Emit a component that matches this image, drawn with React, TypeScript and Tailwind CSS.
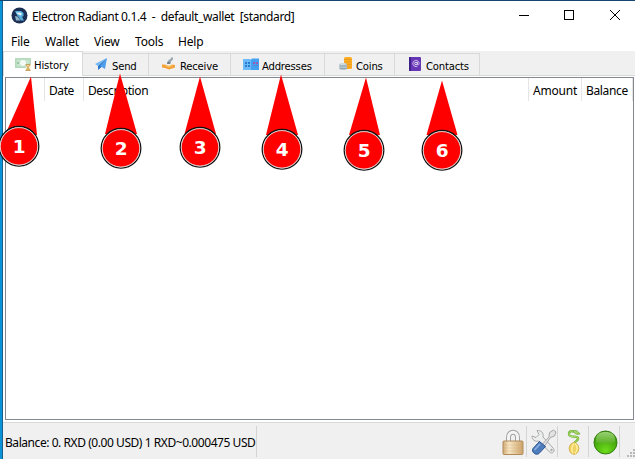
import React from 'react';

const menus = [
  { label: 'File', cls: 'w-[34px] tracking-[-0.1px]' },
  { label: 'Wallet', cls: 'w-[49px] tracking-[-0.15px]' },
  { label: 'View', cls: 'w-[41px] tracking-[-0.2px]' },
  { label: 'Tools', cls: 'w-[43px] tracking-[-0.2px]' },
  { label: 'Help', cls: 'w-[40px] tracking-[-0.2px]' },
];

function AppLogo() {
  return (
    <svg width="17" height="17" viewBox="0 0 17 17" className="-mt-px shrink-0">
      <circle cx="8.500" cy="8.500" r="8" fill="#1b2f55" />
      <path d="M4 4h6l2.500 2v3l-1.500 1 2 3.500H10L6 8z" fill="#58aedb" />
      <path d="M5 5.500h4.500L11 7 9.500 8.500 6.500 7z" fill="#e6f1f7" />
      <path d="M4 9l2.500.500L9.500 13.500H5z" fill="#8fb4c9" />
    </svg>
  );
}

function HistoryIcon() {
  return (
    <svg width="17" height="15" viewBox="0 0 17 15" className="shrink-0">
      <rect x="0" y="1" width="16" height="10" rx=".5" fill="#b5d8bc" />
      <rect x="1.500" y="2.500" width="13" height="7" fill="#c7e4cc" />
      <circle cx="8" cy="6" r="3" fill="#f3faf3" />
      <circle cx="3" cy="6" r="1" fill="#89bb95" />
      <rect x="11" y="7" width="5" height="7" fill="#fff4d9" />
      <path d="M10.500 7.500h5M10.500 13.500h5M11 8l4 5M15 8l-4 5" stroke="#b18c49" strokeWidth=".8" fill="none" />
      <path d="M11.500 8.500h3L13 10zM11 13l2-2 2 2z" fill="#e4b94c" />
    </svg>
  );
}

function SendIcon() {
  return (
    <svg width="13" height="13" viewBox="0 0 13 13" className="shrink-0">
      <path d="M12 0L0 6l3 2z" fill="#72b7f4" />
      <path d="M12 0L3 8v4l3-2.500z" fill="#2876c8" />
      <path d="M12 0L5 8l5 3z" fill="#4f9fea" />
    </svg>
  );
}

function ReceiveIcon() {
  return (
    <svg width="14" height="14" viewBox="0 0 14 14" className="-mt-px shrink-0">
      <path d="M9 .5h2v2L9 4.500 8.500 7l-3-1 1-3 2-1z" fill="#9aa8b1" />
      <path d="M5.500 4.500l3 1-1 1.500H5z" fill="#6d7f8b" />
      <path d="M0 7.500h3l4 2 3-2 3 .5v2.500L7 12.500 3 11 0 10.500z" fill="#f3a137" />
      <path d="M1.500 8l5.500 2.500 5-2.500-3 .5H5z" fill="#ffc45f" />
    </svg>
  );
}

function AddressesIcon() {
  return (
    <svg width="17" height="13" viewBox="0 0 17 13" className="-mt-px shrink-0">
      <path d="M0 1h7l1 .5V12H0z" fill="#6bbafa" />
      <path d="M8 1.500L9 .5h7V12H8z" fill="#43a1f2" />
      <path d="M2 4h2v2H2zM5 4h2v2H5zM2 7h2v2H2zM5 7h2v2H5z" fill="#2d7bcf" />
      <path d="M10 4h2v2h-2zM13 4h2v2h-2zM10 7h1v1h-1z" fill="#a05bb8" />
      <path d="M12 7h3v1h-3z" fill="#5f78d0" />
    </svg>
  );
}

function CoinsIcon() {
  return (
    <svg width="14" height="14" viewBox="0 0 14 14" className="-mt-px shrink-0">
      <rect x="5" y="0" width="8" height="12" rx="1.500" fill="#ffad22" />
      <path d="M5 2.500h7.500M5 5h7.500M5 7.500h7.500M5 10h7.500" stroke="#e59722" strokeWidth=".8" />
      <rect x="0" y="6" width="8" height="7" rx="2.500" fill="#b9c8cf" />
      <path d="M1 9h7M1 11.500h7" stroke="#7f98a3" strokeWidth=".7" />
      <path d="M1.500 7h5" stroke="#e4eef0" />
    </svg>
  );
}

function ContactsIcon() {
  return (
    <svg width="13" height="14" viewBox="0 0 13 14" className="-mt-[2px] shrink-0">
      <rect x="0" y="0" width="12" height="14" rx="1" fill="#6736b5" />
      <rect x="0" y="0" width="2" height="14" rx=".5" fill="#40208a" />
      <circle cx="7" cy="6.500" r="1.300" fill="none" stroke="#fff" strokeWidth=".8" />
      <path d="M8.400 5v2.200c0 1 1.700 1 1.700-.7A3.100 3.100 0 1 0 8.500 9.200" fill="none" stroke="#e9dcff" strokeWidth=".8" />
    </svg>
  );
}

function Lock() {
  return (
    <svg width="22" height="27" viewBox="0 0 22 27">
      <defs>
        <linearGradient id="brass" x2="1">
          <stop stopColor="#d0a873" />
          <stop offset=".3" stopColor="#f8e6c4" />
          <stop offset="1" stopColor="#cda36b" />
        </linearGradient>
      </defs>
      <path d="M6.500 15V8.500c0-7 9-7 9 0V15" fill="none" stroke="#a2a2a2" strokeWidth="5" />
      <path d="M6.500 15V8.500c0-7 9-7 9 0V15" fill="none" stroke="#f4f4f4" strokeWidth="3" />
      <rect x="1" y="12" width="20" height="13.500" rx="1" fill="url(#brass)" stroke="#b08b5a" />
      <path d="M2.500 16h17M2.500 19h17M2.500 22h17" stroke="#b58c55" strokeOpacity=".2" />
    </svg>
  );
}

function Tools() {
  return (
    <svg width="26" height="26" viewBox="0 0 26 26">
      <path d="M6 1.500l2 4-3 3-4-1.500c0 4 3 6 7 5l10.500 11c2.500 2.500 6-.5 4-3.500L12 8c1-4-2-7-6-6.500z" fill="#eceded" stroke="#a5a9a8" />
      <circle cx="20.500" cy="21" r="1.200" fill="#aaa" />
      <path d="M11.500 15L18 8l.5-4.500L22.500 1l2.500 2-1.500 4-4 1.500-6 8.500z" fill="#e2e2e2" stroke="#969696" strokeWidth=".8" />
      <path d="M8.500 12.500l6 5L8 24.500c-3 2.500-8-1.500-6-5z" fill="#4d7dbd" stroke="#2d5592" />
      <path d="M9 15l-5.500 6" stroke="#8fb4e3" strokeWidth="1.500" />
    </svg>
  );
}

function Seed() {
  return (
    <svg width="19" height="27" viewBox="0 0 19 27">
      <path d="M10 15c0-3 5-3 4-6-1-2.500-8 0-9-3.500C4.500 2 8 1.500 10 3" fill="none" stroke="#68ae29" strokeWidth="2.200" />
      <path d="M10 15c0-3 5-3 4-6-1-2.500-8 0-9-3.500C4.500 2 8 1.500 10 3" fill="none" stroke="#b6e773" />
      <path d="M9 2c3-1.500 5 0 7 3-3 1-5.500 0-7-3z" fill="#a3d464" stroke="#609e2d" strokeWidth=".6" />
      <ellipse cx="10" cy="19.500" rx="4.800" ry="5.800" fill="#f0d163" stroke="#d6b14a" />
      <path d="M10 14.500c-2.500 3-2.500 7-1 10M11 14.500c3 3 2.500 7 0 10" stroke="#fff0a1" fill="none" strokeWidth="1.300" />
    </svg>
  );
}

function Connected() {
  return (
    <svg width="25" height="25" viewBox="0 0 25 25">
      <defs>
        <radialGradient id="orb" cy=".85" r=".7">
          <stop stopColor="#6ddc1c" />
          <stop offset="1" stopColor="#3c9a08" />
        </radialGradient>
        <linearGradient id="shine" x2="0" y2="1">
          <stop stopColor="#b7e396" />
          <stop offset="1" stopColor="#5dae28" />
        </linearGradient>
      </defs>
      <circle cx="12.500" cy="12.500" r="11.500" fill="url(#orb)" stroke="#347c12" />
      <path d="M3 12C2 4 7 2 12.500 2S23 4 22 12c-5 2-14 2-19 0z" fill="url(#shine)" fillOpacity=".75" />
    </svg>
  );
}

const tabs = [
  { label: 'Send', icon: <SendIcon />, cls: 'w-[66px] pl-[12px] gap-[4px]' },
  { label: 'Receive', icon: <ReceiveIcon />, cls: 'w-[82px] pl-[13px] gap-[4px]' },
  { label: 'Addresses', icon: <AddressesIcon />, cls: 'w-[94px] pl-[12px] gap-[2px]' },
  { label: 'Coins', icon: <CoinsIcon />, cls: 'w-[70px] pl-[14px] gap-[3px]' },
  { label: 'Contacts', icon: <ContactsIcon />, cls: 'w-[85px] pl-[14px] gap-[4px]' },
];

const callouts = [
  { n: 1, x: 19, y: 146, cone: '31,76.500 5,135 37,135' },
  { n: 2, x: 121, y: 148, cone: '120,73.500 105,134 137,134' },
  { n: 3, x: 200, y: 147, cone: '200,76.500 184.500,134 216,134' },
  { n: 4, x: 282, y: 149, cone: '281,74.500 266,135 298,135' },
  { n: 5, x: 364, y: 150, cone: '366,77.500 349,135 380,135' },
  { n: 6, x: 442, y: 150, cone: '442,80.500 426.500,135 457.500,135' },
];

function Callouts() {
  return (
    <svg className="absolute -top-px left-0" width="635" height="459" viewBox="0 0 635 459">
      {callouts.map((c) => (
        <g key={c.n}>
          <polygon points={c.cone} fill="#f00" />
          <circle cx={c.x} cy={c.y + 0.3} r="19.800" fill="#fff" stroke="#111" strokeWidth="1.300" />
          <circle cx={c.x} cy={c.y + 0.3} r="18.700" fill="#f00" stroke="#ddd" strokeWidth=".8" />
          <text x={c.x + 0.3} y={c.y + 7} textAnchor="middle" fill="#fff" fontFamily="DejaVu Sans, sans-serif" fontWeight="700" fontSize="18.500">{c.n}</text>
        </g>
      ))}
    </svg>
  );
}

export default function App() {
  return (
    <div className="relative flex h-[459px] w-[635px] flex-col overflow-hidden border-t border-[#174571] bg-[#f0f0f0] font-['Noto_Sans',sans-serif] text-[12px] leading-[16px] text-black">
      <div className="flex min-h-0 flex-1">
        <div className="w-[3px] shrink-0 border-r border-[#17618f] bg-[#0b93d8]" />
        <div className="flex min-w-0 flex-1 flex-col">
          <header className="flex h-[30px] shrink-0 items-center bg-white pl-[8px]">
            <AppLogo />
            <span className="ml-[4px] whitespace-pre pt-px tracking-[-0.37px]">Electron Radiant 0.1.4  -  default_wallet  [standard]</span>
            <div className="ml-auto flex items-center pb-[2px] pr-[15px]">
              <svg className="mr-[35px]" width="10" height="10"><path d="M0 5.500h10" stroke="#000" /></svg>
              <svg className="mr-[36px]" width="10" height="10"><rect x=".5" y=".5" width="9" height="9" fill="none" stroke="#000" /></svg>
              <svg width="10" height="10"><path d="M0 0l10 10M10 0L0 10" stroke="#000" /></svg>
            </div>
          </header>
          <nav className="flex h-[20px] shrink-0 items-center bg-white pl-[8px] pt-[2px]">
            {menus.map((m) => (
              <span key={m.label} className={m.cls}>{m.label}</span>
            ))}
          </nav>
          <div className="flex h-[25px] shrink-0 items-end border-b border-[#d9d9d9] font-['DejaVu_Sans_Condensed','DejaVu_Sans',sans-serif] text-[11.200px]">
            <div className="-mb-px flex h-[25px] w-[80px] items-center gap-[2px] border border-b-0 border-[#d9d9d9] bg-white pl-[11px] tracking-[-0.15px]">
              <HistoryIcon />
              <span className="pt-[3px]">History</span>
            </div>
            {tabs.map((t) => (
              <div key={t.label} className={`flex h-[22px] items-center border-r border-t border-[#d9d9d9] tracking-[-0.2px] ${t.cls}`}>
                {t.icon}
                <span className="pt-[4px]">{t.label}</span>
              </div>
            ))}
          </div>
          <main className="flex h-[347px] shrink-0 flex-col border-b border-[#d9d9d9] bg-white pb-[2px] pl-[2px] pr-px pt-px">
            <div className="flex-1 border border-[#828790]">
              <div className="flex h-[23px] items-center leading-[25px] tracking-[-0.2px]">
                <div className="h-full w-[39px] border-r border-[#e5e5e5]" />
                <div className="h-full w-[39px] border-r border-[#e5e5e5] pl-[4px] tracking-[-0.4px]">Date</div>
                <div className="h-full w-[445px] border-r border-[#e5e5e5] pl-[4px] tracking-[-0.4px]">Description</div>
                <div className="h-full w-[53px] border-r border-[#e5e5e5] pl-[4px]">Amount</div>
                <div className="h-full w-[51px] border-r border-[#e5e5e5] pl-[4px] tracking-[-0.35px]">Balance</div>
              </div>
            </div>
          </main>
          <footer className="flex flex-1 items-center">
            <div className="flex h-[31px] w-[254px] items-center whitespace-nowrap border-r border-[#d4d4d4] pl-[2px] pt-[3px] tracking-[-0.44px]">Balance: 0. RXD (0.00 USD) 1 RXD~0.000475 USD</div>
            <div className="ml-auto flex h-[31px]">
              <div className="flex w-[31px] items-center justify-center border-r border-[#d4d4d4] pl-[3px] pt-[2px]"><Lock /></div>
              <div className="flex w-[31px] items-center justify-center border-r border-[#d4d4d4] pl-[3px] pt-[2px]"><Tools /></div>
              <div className="flex w-[31px] items-center justify-center border-r border-[#d4d4d4] pt-[2px]"><Seed /></div>
              <div className="flex w-[31px] items-center justify-center border-r border-[#d4d4d4] pl-[3px] pt-[2px]"><Connected /></div>
            </div>
            <svg width="15" height="35" viewBox="0 0 15 35" className="shrink-0" fill="#b8b8b8">
              <path d="M13 25h2v2h-2zM10 28h2v2h-2zM13 28h2v2h-2zM7 31h2v2H7zM10 31h2v2h-2zM13 31h2v2h-2z" />
            </svg>
          </footer>
        </div>
      </div>
      <Callouts />
    </div>
  );
}
